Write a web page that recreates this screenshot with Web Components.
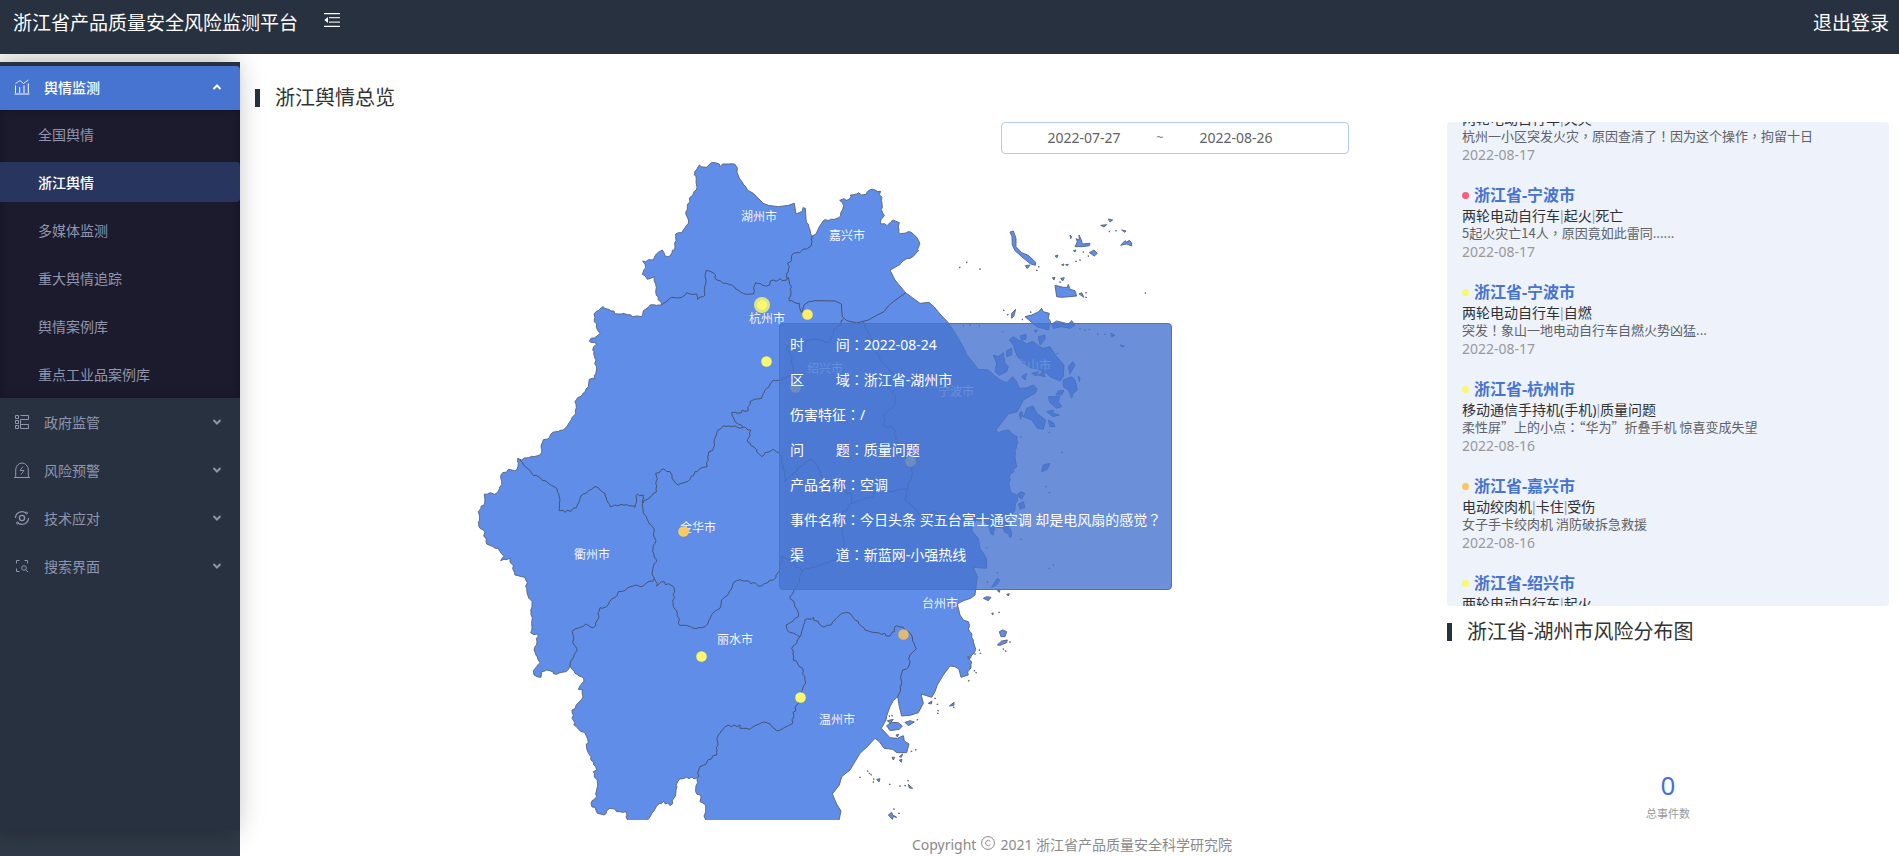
<!DOCTYPE html>
<html lang="zh-CN">
<head>
<meta charset="utf-8">
<title>浙江省产品质量安全风险监测平台</title>
<style>
  body { margin: 0; background: #fff; color: #333; font: 14px/20px "Noto Sans", "Noto Sans CJK SC", sans-serif; }
  /* centred full-width punctuation */
  i { font-style: normal; font-family: "Noto Sans CJK TC", sans-serif; }
</style>
</head>
<body>
<app-shell>
  <app-header slot="header">浙江省产品质量安全风险监测平台</app-header>
  <side-nav slot="nav">
    <nav-group open label="舆情监测" icon="chart">
      <nav-link>全国舆情</nav-link>
      <nav-link current>浙江舆情</nav-link>
      <nav-link>多媒体监测</nav-link>
      <nav-link>重大舆情追踪</nav-link>
      <nav-link>舆情案例库</nav-link>
      <nav-link>重点工业品案例库</nav-link>
    </nav-group>
    <nav-group label="政府监管" icon="form"></nav-group>
    <nav-group label="风险预警" icon="alarm"></nav-group>
    <nav-group label="技术应对" icon="cycle"></nav-group>
    <nav-group label="搜索界面" icon="scan"></nav-group>
  </side-nav>
  <section-heading slot="title">浙江舆情总览</section-heading>
  <date-range slot="map" from="2022-07-27" to="2022-08-26"></date-range>
  <region-map slot="map">
    <event-tip>
      <p>时&emsp;&emsp;&nbsp;间<i lang="zh-TW">：</i>2022-08-24</p>
      <p>区&emsp;&emsp;&nbsp;域<i lang="zh-TW">：</i>浙江省-湖州市</p>
      <p>伤害特征<i lang="zh-TW">：</i>/</p>
      <p>问&emsp;&emsp;&nbsp;题<i lang="zh-TW">：</i>质量问题</p>
      <p>产品名称<i lang="zh-TW">：</i>空调</p>
      <p>事件名称<i lang="zh-TW">：</i>今日头条 买五台富士通空调 却是电风扇的感觉<i lang="zh-TW">？</i></p>
      <p>渠&emsp;&emsp;&nbsp;道<i lang="zh-TW">：</i>新蓝网-小强热线</p>
    </event-tip>
  </region-map>
  <event-list slot="side">
    <event-item tags="两轮电动自行车|火灾" date="2022-08-17">杭州一小区突发火灾<i lang="zh-TW">，</i>原因查清了<i lang="zh-TW">！</i>因为这个操作<i lang="zh-TW">，</i>拘留十日</event-item>
    <event-item level="#fb5d78" place="浙江省-宁波市" tags="两轮电动自行车|起火|死亡" date="2022-08-17">5起火灾亡14人<i lang="zh-TW">，</i>原因竟如此雷同......</event-item>
    <event-item level="#f9f871" place="浙江省-宁波市" tags="两轮电动自行车|自燃" date="2022-08-17">突发<i lang="zh-TW">！</i>象山一地电动自行车自燃火势凶猛...</event-item>
    <event-item level="#f9f871" place="浙江省-杭州市" tags="移动通信手持机(手机)|质量问题" date="2022-08-16">柔性屏”上的小点<i lang="zh-TW">：</i>“华为”折叠手机 惊喜变成失望</event-item>
    <event-item level="#fdc55f" place="浙江省-嘉兴市" tags="电动绞肉机|卡住|受伤" date="2022-08-16">女子手卡绞肉机 消防破拆急救援</event-item>
    <event-item level="#f9f871" place="浙江省-绍兴市" tags="两轮电动自行车|起火"></event-item>
  </event-list>
  <section-heading slot="side">浙江省-湖州市风险分布图</section-heading>
  <risk-total slot="side" value="0">总事件数</risk-total>
  <page-footer slot="footer"></page-footer>
</app-shell>

<script>
const define = (name, render, after) => customElements.define(name, class extends HTMLElement {
  connectedCallback() {
    if (this.shadowRoot) return;
    const t = document.createElement('template');
    t.innerHTML = render(this);
    this.attachShadow({ mode: 'open' }).append(t.content.cloneNode(true));
    if (after) after(this);
  }
});

/* ---------- page frame ---------- */
define('app-shell', () => `
<style>
  :host { display: flex; flex-direction: column; min-height: 100vh; }
  .body { display: flex; flex: 1; padding-top: 8px; }
  main { flex: 1; min-width: 0; display: flex; flex-direction: column; padding: 20px 10px 0 15px; }
  .grid { display: grid; grid-template-columns: minmax(0, 1fr) 442px; gap: 20px; margin-top: 8px; }
  .side { display: flex; flex-direction: column; gap: 10px; }
  footer { margin-top: 12px; }
</style>
<slot name="header"></slot>
<div class="body">
  <slot name="nav"></slot>
  <main>
    <slot name="title"></slot>
    <div class="grid">
      <div><slot name="map"></slot></div>
      <div class="side"><slot name="side"></slot></div>
    </div>
    <footer><slot name="footer"></slot></footer>
  </main>
</div>`);

define('app-header', () => `
<style>
  :host { display: block; position: relative; z-index: 2; background: #28313f; color: #fff; }
  header { display: flex; align-items: center; height: 46px; padding: 0 10px 8px 13px; font-size: 19px; line-height: 28px; }
  h1 { margin: 0; font: inherit; }
  button { margin: 0 auto 6px 26px; padding: 0; border: 0; background: none; color: inherit; display: flex; cursor: pointer; }
  a { color: inherit; text-decoration: none; }
</style>
<header>
  <h1><slot></slot></h1>
  <button aria-label="收起菜单"><svg width="16" height="16" viewBox="0 0 16 16" fill="none" stroke="#fff">
    <path d="M0 1.6h16M0 14.4h16" stroke-width="1.3"/><path d="M5 5.7h11M5 10.2h11" stroke-width="1.3" opacity=".85"/><path d="M4 5v6L0.3 8z" fill="#fff" stroke="none"/></svg></button>
  <a href="#">退出登录</a>
</header>`);

/* ---------- navigation ---------- */
define('side-nav', () => `
<style>
  :host { display: block; width: 240px; flex: none; position: relative; z-index: 1; background: #2f3947; }
  nav { box-sizing: border-box; height: calc(100vh - 88px); padding-top: 4px; background: #28313f; box-shadow: -6px 0 26px rgba(0, 0, 0, .34); }
</style>
<nav><slot></slot></nav>`);

const ICONS = {
  chart: '<path d="M.5 15h15M1.500 14V6.500M5.700 14V8M10 14V6.500M14.300 14V4.500"/><path d="M1.500 4.500 6 1.500l3.500 3L14.500 1" stroke-width=".8"/>',
  form: '<path d="M1.500 1.500h3v3h-3zM1.500 6.500h3v3h-3zM1.500 11.500h3v3h-3z"/><path d="M6.500 1.500h8v4h-8v9h8v-4h-8"/>',
  alarm: '<path d="M0 15.500h16M1.700 15V8a6.300 7 0 0 1 12.600 0v7"/><path d="M9 4.500 6 8.500h4L7 12.500" stroke-width=".9"/>',
  cycle: '<g stroke-width="1.300"><circle cx="8" cy="8" r="2.600"/><path d="M1.500 8A6.500 6.500 0 0 1 12 3M14.500 8A6.500 6.500 0 0 1 4 13"/></g><circle cx="12.500" cy="3" r="1"/><circle cx="3.500" cy="13" r="1"/>',
  scan: '<path d="M2.500 5.500v-3h3M10.500 2.500h3v3M2.500 10.500v3h3"/><circle cx="10" cy="10" r="2.300"/><path d="m12 12 2 2"/>'
};

define('nav-group', el => `
<style>
  :host { display: flex; flex-direction: column; }
  button { display: flex; align-items: center; height: 40px; margin: 4px 0; padding: 0 16px 0 14px; border: 0; background: none; color: #9095ad; font: inherit; text-align: left; cursor: pointer; }
  span { flex: 1; padding: 2px 0 0 14px; }
  .arrow { color: #8d96a3; }
  .sub { display: none; }
  :host([open]) button { height: 44px; margin: 0; padding-bottom: 2px; background: #4674d0; color: #fff; font-weight: 500; border-radius: 0 4px 0 0; }
  :host([open]) .arrow { color: #fff; }
  :host([open]) .sub { display: flex; flex-direction: column; gap: 8px; padding: 4px 0; background: #1b1b2d; box-shadow: inset 0 0 8px rgba(0, 0, 20, .3); }
</style>
<button aria-expanded="${el.hasAttribute('open')}">
  <svg width="16" height="16" viewBox="0 0 16 16" fill="none" stroke="currentColor">${ICONS[el.getAttribute('icon')]}</svg>
  <span>${el.getAttribute('label')}</span>
  <svg class="arrow" width="14" height="10" viewBox="0 0 14 10" fill="none" stroke="currentColor" stroke-width="2"><path d="${el.hasAttribute('open') ? 'M3.500 7 7 3.500l3.500 3.500' : 'M3.500 3 7 6.500 10.500 3'}"/></svg>
</button>
<div class="sub"><slot></slot></div>`);

define('nav-link', el => `
<style>
  :host { display: block; }
  a { display: block; padding: 11px 0 9px 38px; color: #9095ad; text-decoration: none; border-radius: 0 4px 4px 0; }
  :host([current]) a { background: #27355f; color: #fff; font-weight: 500; }
</style>
<a href="#"${el.hasAttribute('current') ? ' aria-current="page"' : ''}><slot></slot></a>`);

/* ---------- content pieces ---------- */
define('section-heading', () => `
<style>
  :host { display: block; }
  h2 { display: flex; align-items: center; gap: 15px; margin: 0; font-weight: 400; font-size: 20px; line-height: 32px; }
  h2::before { content: ""; width: 5px; height: 18px; background: #28313f; }
</style>
<h2><slot></slot></h2>`);

define('date-range', el => `
<style>
  :host { display: flex; justify-content: flex-end; padding: 0 78px 6px 0; }
  div { display: flex; align-items: center; box-sizing: border-box; width: 348px; height: 32px; padding-left: 12px; border: 1px solid #b7c9ee; border-radius: 4px; }
  input { width: 140px; box-sizing: border-box; padding: 0; border: 0; background: none; text-align: center; color: #606266; font: inherit; }
  span { width: 12px; text-align: center; color: #777; font-size: 12px; }
</style>
<div><input aria-label="开始日期" value="${el.getAttribute('from')}"><span>~</span><input aria-label="结束日期" value="${el.getAttribute('to')}"></div>`);

define('event-tip', () => `
<style>
  :host { display: block; padding: 3px 10px 17px; border: 1px solid #4573cd; border-radius: 4px; background: rgba(70, 116, 208, .8); color: #fff; white-space: nowrap; }
  ::slotted(p) { margin: 0; line-height: 35px; }
</style>
<slot></slot>`);

define('event-list', () => `
<style>
  :host { display: block; box-sizing: border-box; height: 484px; padding: 0 15px; overflow-y: scroll; scrollbar-width: none; border-radius: 4px; background: #edf2fb; }
</style>
<slot></slot>`, el => requestAnimationFrame(() => { el.scrollTop = 36; }));

define('event-item', el => `
<style>
  :host { display: block; height: 97px; }
  h3 { display: flex; align-items: center; gap: 5px; height: 24px; margin: 0; font-size: 16px; line-height: 24px; color: #4674d0; }
  h3 i { width: 7px; height: 7px; border-radius: 50%; background: ${el.getAttribute('level') || 'none'}; }
  p { margin: 0; white-space: nowrap; }
  .tags { line-height: 17px; color: #303133; }
  .tags b { font: 14px/17px "Liberation Sans", sans-serif; color: #98a2b6; }
  .text { font: 13px/16px "Noto Sans CJK SC", sans-serif; color: #606266; }
  time { display: block; line-height: 22px; color: #999; }
</style>
<h3><i></i>${el.getAttribute('place') || ''}</h3>
<p class="tags">${el.getAttribute('tags').split('|').join('<b>|</b>')}</p>
<p class="text"><slot></slot></p>
<time>${el.getAttribute('date') || ''}</time>`);

define('risk-total', el => `
<style>
  :host { display: flex; flex-direction: column; align-items: center; gap: 5px; padding-top: 111px; }
  output { font-size: 26px; line-height: 32px; color: #4674d0; }
  label { font-size: 11px; line-height: 16px; color: #999; }
</style>
<output id="n">${el.getAttribute('value')}</output><label for="n"><slot></slot></label>`);

define('page-footer', () => `
<style>
  :host { display: flex; justify-content: center; align-items: center; gap: 5px; line-height: 22px; color: #8a8a8a; }
  svg { margin-bottom: 4px; }
</style>
<span>Copyright</span>
<svg width="14" height="14" viewBox="0 0 14 14" fill="none" stroke="currentColor" role="img" aria-label="版权"><circle cx="7" cy="7" r="6.400"/><path d="M9.300 5.500a2.600 2.600 0 1 0 0 3"/></svg>
<span>2021 浙江省产品质量安全科学研究院</span>`);

/* ---------- map ---------- */
/* Coordinates are thirds of a pixel. Natural borders get extra jagged points from a seeded generator. */
let seed = 11;
const rnd = () => (seed = (seed * 16807) % 2147483647) / 2147483647 - .5;
const parse = s => s.trim().split(/\s+/).map(p => p.split(',').map(Number));
function jag(pts) {
  const out = [pts[0]];
  for (let i = 1; i < pts.length; i++) {
    const [ax, ay] = pts[i - 1], [bx, by] = pts[i], len = Math.hypot(bx - ax, by - ay);
    const n = Math.max(1, Math.round(len / 9));
    for (let k = 1; k < n; k++) out.push([ax + (bx - ax) * k / n + rnd() * 8, ay + (by - ay) * k / n + rnd() * 8]);
    out.push([bx, by]);
  }
  return out;
}
const d = pts => 'M' + pts.map(p => p.map(v => Math.round(v)).join(' ')).join('L');

const COAST = [
  [1, '718,75 724,80 742,82 745,76 766,68 778,72 780,80 788,72 825,73 832,84 835,106 846,125 862,150'],
  [0, '862,150 880,160 910,190 925,196 955,200 985,196 1003,190'],
  [0, '1003,190 1008,222 1027,214 1029,203 1036,205 1038,235'],
  [1, '1038,235 1047,262 1057,288'],
  [0, '1057,288 1068,282 1078,260 1090,242'],
  [1, '1090,242 1123,238 1142,228 1148,208 1147,188 1139,181 1167,178 1171,165 1195,158 1205,165 1240,148 1262,154 1264,208 1273,226 1262,252 1281,257 1300,240 1318,248 1316,278 1352,276 1375,300 1376,332 1350,355 1330,362 1320,374 1290,390'],
  [0, '1290,390 1305,420 1337,458 1380,490 1407,487 1422,500 1440,522 1465,548 1495,595 1512,625 1520,645 1535,662 1555,688 1585,690 1602,705 1620,720 1640,728 1658,710 1668,722 1678,745 1700,744 1720,735 1732,748 1725,760 1690,780 1672,815 1645,822 1625,848 1608,870 1615,878 1630,872 1645,870'],
  [1, '1645,870 1672,890 1665,950 1670,980 1648,1010 1650,1050 1672,1070 1665,1110 1635,1145 1655,1180 1648,1192 1630,1165 1605,1160 1600,1185 1590,1175 1580,1150 1550,1140 1535,1170 1555,1195'],
  [0, '1555,1195 1560,1225 1580,1255 1580,1285 1540,1282 1552,1310 1545,1365 1532,1375 1510,1382 1492,1392 1500,1425 1510,1440 1525,1445'],
  [1, '1525,1445 1530,1475 1540,1500 1547,1528 1525,1550 1535,1565 1525,1605'],
  [0, '1525,1605 1503,1612 1497,1588 1485,1580 1470,1578 1450,1605 1432,1635 1425,1655 1415,1672 1383,1662 1390,1690 1375,1718 1350,1726 1325,1728 1318,1700 1313,1670 1300,1682 1290,1700 1280,1728 1278,1740 1264,1765 1290,1793 1312,1795 1330,1787 1333,1803 1347,1812 1340,1838 1310,1838 1298,1828 1272,1825 1258,1805 1245,1795 1222,1820 1200,1840 1185,1865 1170,1890 1145,1910 1138,1935 1117,1962 1130,1992 1143,2013 1133,2060 735,2060'],
  [1, '735,2060 737,1995 720,1985 722,1965 707,1955 712,1913 670,1916 653,1925 645,1970 630,1997 610,1983 590,1998 563,2040'],
  [0, '563,2040 563,2060 503,2060 503,2040'],
  [1, '503,2040 498,2015 470,2015 450,2005 432,2025 412,2020 393,1990 410,1970 412,1930 400,1895 410,1890 385,1840 380,1790 342,1755 336,1710 367,1675 368,1650 355,1648 372,1620 345,1600 330,1577 318,1595 290,1603 270,1592 245,1595 243,1612 222,1605 220,1592 240,1568 222,1530 235,1488 212,1478 216,1390 205,1370 195,1312 165,1305 150,1255 122,1262 133,1248 115,1225 80,1212 70,1170 60,1165 55,1115 72,1095 73,1062 112,1058 125,1025 123,1005 145,988 170,990 173,955 185,960 240,945 247,908 278,877 310,870 347,820 345,785 385,740 388,718 405,718 408,660 398,630 410,612 388,603 420,580 403,545 402,522 430,500 475,522 545,530 550,512 580,494 605,495 587,455 583,410 562,418 547,403 557,383 548,363 580,360 585,348 607,330 615,348 630,348 645,320 647,282 665,278 685,250 678,215 688,175 709,150 708,110 704,95 718,75']
];
const BORDERS = [
  '1057,288 1053,318 1030,328 1000,340 995,362 982,370 986,385 980,415',
  '605,495 635,472 665,472 680,458 710,462 712,478 735,465 738,392 762,400 765,415 800,430 845,458 880,462 887,428 920,438 940,420 980,420 985,412 995,440 988,482 1018,490 1026,518',
  '1150,538 1130,565 1120,580 1105,608 1060,598 1010,620 980,625 995,650 1000,700 965,720 940,720 920,745 905,775 870,785 865,812 815,818 825,845 850,862',
  '850,862 790,857 770,880 760,925 745,945 742,980 705,995 690,1018 655,1035 640,1020 630,995 605,988 587,1000 590,1055 548,1090',
  '850,862 872,870 862,905 905,950 940,928 965,950 975,1025 1000,1000 1050,957 1075,980 1085,1010 1150,1050 1172,1060',
  '1210,545 1225,575 1250,640 1270,670 1300,700 1285,740 1308,770 1300,800 1270,830 1270,855 1300,865 1310,905 1350,965 1358,1000 1340,1050 1335,1080 1390,1130 1420,1115 1460,1140 1535,1150',
  '1175,1090 1240,1070 1250,1045 1300,1055 1337,1045',
  '1172,1060 1175,1090 1145,1120 1148,1190 1150,1220 1125,1262 1085,1275 1030,1290 1015,1330 990,1370 1012,1410 1015,1430 978,1455 985,1475 1020,1490',
  '1030,1295 1005,1275 965,1248 957,1295 940,1320 905,1338 880,1328 830,1322 812,1350 785,1380 780,1405 758,1420 735,1460 695,1463 655,1450 652,1420 640,1400 642,1342 605,1325 590,1338 583,1315',
  '548,1090 550,1120 583,1170 585,1210 578,1235 590,1265 578,1290 583,1315',
  '583,1315 550,1338 520,1338 475,1355 440,1400 420,1403 412,1440 400,1463 375,1453 340,1470 338,1505 350,1525 340,1555 330,1577',
  '180,960 215,1000 255,1022 290,1045 300,1080 298,1112 333,1114 352,1095 360,1075 408,1040 435,1060 450,1100 500,1093 525,1102 532,1062 550,1065 548,1090',
  '1020,1490 1012,1500 995,1525 1000,1560 1028,1585 1035,1620 1025,1665 1005,1700 998,1750 950,1773 930,1752 905,1748 870,1768 840,1765 840,1755 795,1760 775,1785 770,1845 720,1880 712,1913',
  '1020,1490 1035,1440 1060,1432 1085,1458 1113,1455 1145,1420 1165,1418 1195,1445 1215,1470 1245,1478 1290,1488 1310,1457 1345,1475 1368,1525 1350,1545 1348,1575 1325,1600 1322,1650 1313,1670'
];
const BAY_BORDER = '1026,518 1032,495 1045,486 1065,482 1125,483 1144,492 1147,530 1160,542 1190,549 1225,540 1250,526 1272,515 1285,498 1300,485 1337,458';
const ISLANDS = [
  [1260, -120, `390,396 400,393 408,415 408,440 425,458 445,466 467,487 466,496 452,492 425,470 405,452 397,435 396,410|436,497 450,495 442,506|585,440 592,425 588,416 598,420 597,405 604,420 607,432 630,430 628,437 608,440|628,458 642,450 652,460 643,468|722,436 735,422 740,426 748,421 755,428 755,438 740,432|525,556 550,562 562,562 565,553 570,568 585,572 590,588 570,590 545,592 530,590|597,582 605,578 612,592|542,535 553,533 548,543|517,533 525,532 522,540|435,650 455,645 475,636 485,625 490,635 508,640 505,655 512,665 505,690 470,680|395,655 395,640 407,628 402,648|515,672 530,663 550,668 565,672 575,662 585,675 570,685 545,680 520,685|685,357 698,360 690,366|662,376 680,374 672,381|725,390 738,393 735,397|525,468 534,465 531,473|545,494 552,492 550,497|557,494 565,493 562,497|580,452 588,450 585,456|570,405 575,410 572,416|388,720 400,710 415,720 430,725 440,732 455,725 465,728 475,738 490,745 510,740 530,770 552,795 550,830 540,843 510,830 500,820 480,810 455,805 430,790 410,765 400,735|340,765 355,770 370,758 375,790 385,800 380,815 358,826 345,815 350,790|380,752 395,745 395,765 380,770|475,710 495,705 495,718 480,735|420,708 438,703 438,718 425,720|565,800 578,785 585,795 570,822|550,840 575,830 585,840 592,870 580,880 575,895 565,870 550,860|505,890 540,890 535,905 545,920 530,925 510,908|535,872 552,872 545,885 528,885|418,940 427,935 422,958|500,935 520,930 518,940 538,945 520,950|425,830 440,820 435,840|455,820 475,815 470,828|475,825 490,815 495,830|505,960 520,968 525,980 510,980|720,735 733,738 727,742|692,700 705,706 695,710|462,692 472,690 468,697|595,828 600,835 598,845`,
    '239,502 260,487 300,507 688,394 708,392 796,579 476,500 470,511 610,456 625,468 600,480 588,484 371,631 383,644 427,658 452,636 618,578 618,592 540,546 250,678 270,675 298,678 368,695 600,686 615,690 628,688 653,702 675,703 532,760 448,750'],
  [900, 480, `778,345 782,335 792,350 800,325 820,318 830,340 857,360 850,388 832,385 815,360|845,515 850,495 870,490 862,508|770,585 782,575 795,580 785,598|775,612 790,605 795,622 780,628`,
    '905,457 858,560 868,578 783,718 680,743 880,795 868,805 877,370 868,397 783,410'],
  [1200, 1260, `395,82 412,55 420,60 410,75|370,115 380,110 393,112 385,122|412,92 420,90 418,97|440,103 448,101 445,108|418,215 428,210 440,215 435,230 423,230|412,255 425,243 442,240 440,248 420,256|395,160 400,159 398,165|80,497 95,487 115,488 127,498 118,508 90,512|82,482 100,478 90,490|135,487 150,482 163,486 145,497|205,430 216,423 214,432|268,438 282,427 282,436|96,592 104,592 100,600|118,600 126,598 124,607|118,590 128,582 124,592|50,658 60,656 57,666|145,673 150,678 158,685 148,684|85,765 95,757 98,765 110,772 100,770 97,778|322,292 334,290 330,296|108,525 116,523 112,531`,
    '417,157 450,246 430,267 437,273 345,282 361,280 358,270 343,332 348,338 330,325 326,362 225,415 232,433 234,452 233,460 281,442 172,479 88,468 96,467 154,574 167,569 23,633 28,640 33,644 41,657 40,666 0,652 89,673 120,678 135,677 144,662 102,747 117,760 382,66 412,38']
];
const CITIES = [['湖州市',759,216],['嘉兴市',847,235],['杭州市',767,318],['绍兴市',825,368],['宁波市',956,391],['舟山市',1033,365],['金华市',698,527],['衢州市',592,554],['丽水市',735,639],['温州市',837,719],['台州市',940,603]];
const PINS = [[807,314,'#fbee66'],[766,361,'#faf871'],[795,387,'#faf871'],[910,461,'#faf871'],[683,531,'#fccb5b'],[701,656,'#faf871'],[800,697,'#faf871'],[903,634,'#e0b974']];

function mapSvg() {
  const land = COAST.flatMap(([rough, s]) => rough ? jag(parse(s)) : parse(s));
  const isles = ISLANDS.map(([x, y, shapes, dots]) => `<g transform="translate(${x} ${y})">` +
    shapes.split('|').map(s => `<path d="${d(parse(s))}Z"/>`).join('') +
    parse(dots).map(([cx, cy]) => `<path d="M${cx - 1} ${cy - 1}l3 1l-2 2z"/>`).join('') + '</g>').join('');
  return `<svg viewBox="441 160 800 660" role="img" aria-label="浙江省地图">
    <g transform="translate(460 140) scale(.33333)" fill="#5f8de7" stroke="#58657c" stroke-width="2.800" stroke-linejoin="round">
      <path d="${d(land)}Z"/>${isles}
      <g fill="none" stroke="#455370" stroke-width="3"><path d="${d(parse(BAY_BORDER))}"/>${BORDERS.map(b => `<path d="${d(jag(parse(b)))}"/>`).join('')}</g>
    </g>
    <g class="names">${CITIES.map(([n, x, y]) => `<text x="${x}" y="${y + 5}">${n}</text>`).join('')}</g>
    <circle cx="762" cy="305" r="8" fill="#dfe47f"/><circle cx="762" cy="305" r="5" fill="#f9f871"/>
    ${PINS.map(([x, y, c]) => `<circle cx="${x + .5}" cy="${y + .5}" r="5.300" fill="${c}"/>`).join('')}
  </svg>`;
}

define('region-map', () => `
<style>
  :host { display: block; position: relative; }
  svg { display: block; width: 100%; height: 660px; }
  text { font-size: 12px; text-anchor: middle; fill: #fff; fill-opacity: .95; }
  ::slotted(event-tip) { position: absolute; top: 163px; left: calc(50% - 62px); }
</style>
${mapSvg()}<slot></slot>`);
</script>
</body>
</html>
